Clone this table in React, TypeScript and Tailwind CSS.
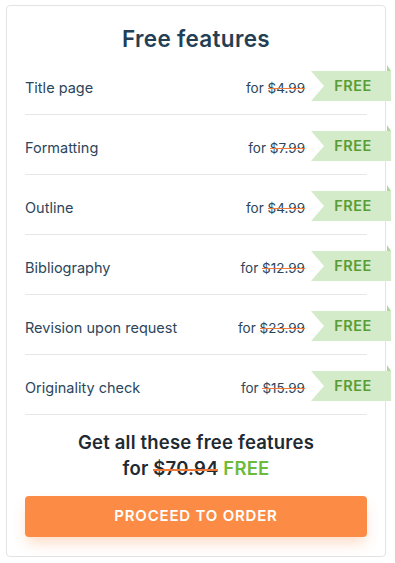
import React from "react";

const rows = [
  { name: "Title page", price: "$4.99" },
  { name: "Formatting", price: "$7.99" },
  { name: "Outline", price: "$4.99" },
  { name: "Bibliography", price: "$12.99" },
  { name: "Revision upon request", price: "$23.99" },
  { name: "Originality check", price: "$15.99" },
];

function Ribbon() {
  return (
    <div className="relative w-[80px] h-[30px] shrink-0 ml-[6px] -mr-[24px] self-start mt-[9px]">
      <div className="absolute right-0 -top-[6px] w-[4px] h-[6px] bg-[#aed69e] [clip-path:polygon(0_0,100%_100%,0_100%)]" />
      <div className="w-full h-full bg-[#d3ebc8] [clip-path:polygon(0_0,100%_0,100%_100%,0_100%,13px_50%)] flex items-center justify-center pl-[4px] text-[14.5px] font-semibold text-[#5a9c36] tracking-[0.5px]">
        FREE
      </div>
    </div>
  );
}

export default function App() {
  return (
    <div className="w-[395px] h-[563px] bg-white pt-[5px] pl-[6px]" style={{ fontFamily: "Inter, 'Noto Sans', sans-serif" }}>
      <div className="w-[380px] h-[552px] border border-[#e3e3e3] rounded-[4px] px-[18px] pt-[19px] flex flex-col">
        <h1 className="text-center text-[22.5px] leading-[28px] font-semibold text-[#243f55] tracking-[0.3px] mb-[2px]">
          Free features
        </h1>
        <div className="flex flex-col">
          {rows.map((r) => (
            <div key={r.name} className="h-[60px] pt-[7px] border-b border-[#e6e6e6] flex items-center">
              <div className="flex-1 text-[14.5px] text-[#2c465b]">{r.name}</div>
              <div className="text-[13.5px] text-[#2c465b]">
                for{" "}
                <span className="relative">
                  {r.price}
                  <span className="absolute left-0 right-0 top-[52%] h-[1px] bg-[#f07a3c]" />
                </span>
              </div>
              <Ribbon />
            </div>
          ))}
        </div>
        <div className="mt-[14px] text-center text-[18.5px] leading-[26px] font-semibold text-[#1f2a33] tracking-[0.2px]">
          <div>Get all these free features</div>
          <div>
            for{" "}
            <span className="relative">
              $70.94
              <span className="absolute left-0 right-0 top-[55%] h-[1.5px] bg-[#f07a3c]" />
            </span>{" "}
            <span className="text-[#6cbb3c]">FREE</span>
          </div>
        </div>
        <button className="mt-[15px] h-[41px] w-full rounded-[4px] bg-[#fc8c45] text-white text-[15px] font-semibold tracking-[0.8px] shadow-[0_8px_14px_-2px_rgba(252,140,69,0.3)]">
          PROCEED TO ORDER
        </button>
      </div>
    </div>
  );
}
